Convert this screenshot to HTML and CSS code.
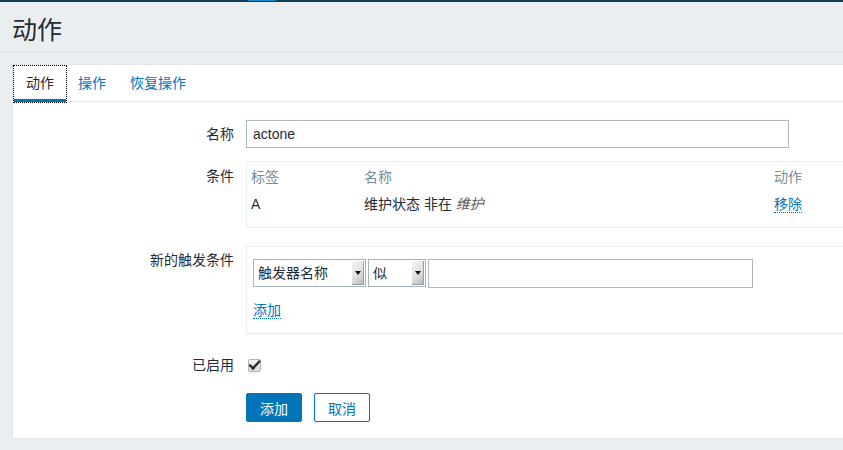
FILE: index.html
```html
<!DOCTYPE html>
<html lang="zh">
<head>
<meta charset="utf-8">
<title>动作</title>
<link rel="stylesheet" href="styles.css">
</head>
<body>
<div class="topbar"><span class="topbar-mark"></span></div>
<header class="page-header"><h1>动作</h1></header>
<main class="panel">
  <nav class="tabs">
    <a class="tab active">动作</a>
    <a class="tab">操作</a>
    <a class="tab">恢复操作</a>
  </nav>
  <div class="form">
    <div class="row row-name">
      <div class="lbl lbl-mid">名称</div>
      <div class="field"><div class="text-input name-input">actone</div></div>
    </div>
    <div class="row row-cond">
      <div class="lbl lbl-cond">条件</div>
      <div class="field">
        <div class="box cond-box">
          <div class="cond-table">
            <div class="th">标签</div>
            <div class="th">名称</div>
            <div class="th">动作</div>
            <div class="td">A</div>
            <div class="td">维护状态 非在 <em class="muted">维护</em></div>
            <div class="td"><a class="link">移除</a></div>
          </div>
        </div>
      </div>
    </div>
    <div class="row row-new">
      <div class="lbl lbl-new">新的触发条件</div>
      <div class="field">
        <div class="box new-box">
          <div class="new-line">
            <div class="fake-select sel-1"><span class="sel-text">触发器名称</span><span class="sel-arrow"><span class="tri"></span></span></div>
            <div class="fake-select sel-2"><span class="sel-text">似</span><span class="sel-arrow"><span class="tri"></span></span></div>
            <div class="text-input value-input"></div>
          </div>
          <div class="add-line"><a class="link">添加</a></div>
        </div>
      </div>
    </div>
    <div class="row row-enabled">
      <div class="lbl">已启用</div>
      <div class="field">
        <span class="checkbox">
          <svg width="13" height="13" viewBox="0 0 13 13"><path d="M2.2 6.6 L5 9.4 L11.2 2.6" fill="none" stroke="#2b2b2b" stroke-width="2.4" stroke-linecap="square"/></svg>
        </span>
      </div>
    </div>
    <div class="row row-buttons">
      <div class="lbl"></div>
      <div class="field buttons">
        <button class="btn btn-primary">添加</button>
        <button class="btn btn-alt">取消</button>
      </div>
    </div>
  </div>
</main>
</body>
</html>
```
FILE: styles.css
```css
html, body {
  margin: 0;
  padding: 0;
  overflow: hidden;
  background: #ebeef0;
}
body {
  font-family: "Liberation Sans", "Noto Sans CJK SC", sans-serif;
  font-size: 14px;
  color: #1f2c33;
  width: 843px;
  height: 450px;
}
.topbar {
  height: 2px;
  background: #0f3b58;
}
.topbar-mark {
  display: block;
  margin-left: 248px;
  width: 28px;
  height: 1px;
  background: #1a86c8;
}
.page-header {
  height: 49px;
  border-bottom: 1px solid #dce1e4;
  padding-left: 12px;
}
.page-header h1 {
  margin: 0;
  padding-top: 12px;
  font-size: 25px;
  line-height: 32px;
  font-weight: normal;
  color: #1f2c33;
}
.panel {
  display: block;
  margin: 12px 0 0 12px;
  width: 860px;
  background: #fff;
  border: 1px solid #dfe4e7;
  border-right: none;
  padding-bottom: 16px;
}
.tabs {
  display: flex;
  border-bottom: 1px solid #ebeef0;
  height: 36px;
}
.tab {
  display: block;
  padding: 0 12px 0 10px;
  line-height: 34px;
  border: 1px solid transparent;
  color: #0275b8;
  height: 35px;
}
.tab.active {
  color: #1f2c33;
  padding: 0 12px;
  border: 1px dotted #000;
  box-shadow: inset 0 -3px 0 #0275b8;
  height: 36px;
}
.form {
  padding-top: 18px;
}
.row {
  display: grid;
  grid-template-columns: 221px 1fr;
  column-gap: 12px;
}
.lbl {
  text-align: right;
  line-height: 18px;
}
.lbl-mid {
  line-height: 28px;
}
.lbl-cond {
  padding-top: 6px;
}
.lbl-new {
  padding-top: 5px;
}
.row-cond { margin-top: 13px; }
.row-new { margin-top: 18px; }
.row-enabled { margin-top: 22px; }
.row-buttons { margin-top: 19px; }

.text-input {
  box-sizing: border-box;
  height: 28px;
  border: 1px solid #acbbc3;
  background: #fff;
  line-height: 26px;
  padding: 0 6px;
  color: #1f2c33;
}
.name-input {
  width: 543px;
}
.box {
  box-sizing: border-box;
  border: 1px solid #ebeef0;
  border-right: none;
}
.cond-box {
  height: 67px;
  padding: 6px 4px 0;
}
.cond-table {
  display: grid;
  grid-template-columns: 113px 410px 1fr;
  grid-auto-rows: 18px;
  row-gap: 9px;
  line-height: 18px;
}
.th {
  color: #768d99;
}
.muted {
  color: #5a5a5a;
}
.link {
  color: #0275b8;
  border-bottom: 1px dotted #0275b8;
  text-decoration: none;
}
.new-box {
  padding: 12px 6px 0;
  height: 88px;
}
.new-line {
  display: flex;
  gap: 2px;
  height: 28px;
}
.fake-select {
  box-sizing: border-box;
  display: flex;
  height: 28px;
  border: 1px solid #a6b3ba;
  background: #fff;
  padding: 1px;
}
.sel-1 { width: 113px; }
.sel-2 { width: 58px; }
.sel-text {
  flex: 1;
  padding-left: 3px;
  line-height: 24px;
}
.sel-arrow {
  display: flex;
  align-items: center;
  justify-content: center;
  width: 11px;
  background: linear-gradient(135deg, #f4f4f4 0%, #dedede 60%, #b9b9b9 100%);
  border-right: 1px solid #9a9a9a;
  border-bottom: 1px solid #9a9a9a;
}
.tri {
  display: block;
  width: 0;
  height: 0;
  border-left: 3px solid transparent;
  border-right: 3px solid transparent;
  border-top: 4px solid #111;
}
.value-input {
  width: 325px;
  height: 29px;
}
.add-line {
  margin-top: 14px;
  line-height: 18px;
}
.row-enabled .field {
  display: flex;
  align-items: center;
  height: 18px;
}
.checkbox {
  display: block;
  box-sizing: border-box;
  width: 13px;
  height: 13px;
  margin-left: 2px;
  margin-top: 1px;
  border: 1px solid #b5b5b5;
  border-radius: 2px;
  background: linear-gradient(#f2f2f2, #dadada);
}
.checkbox svg {
  display: block;
  margin: -1px 0 0 -1px;
}
.buttons {
  display: flex;
  gap: 12px;
}
.btn {
  box-sizing: border-box;
  width: 56px;
  height: 29px;
  border-radius: 2px;
  font-family: "Liberation Sans", "Noto Sans CJK SC", sans-serif;
  font-size: 14px;
  padding: 0;
  border: 1px solid #0275b8;
}
.btn-primary {
  background: #0275b8;
  color: #fff;
}
.btn-alt {
  background: #fff;
  color: #0275b8;
}
```
